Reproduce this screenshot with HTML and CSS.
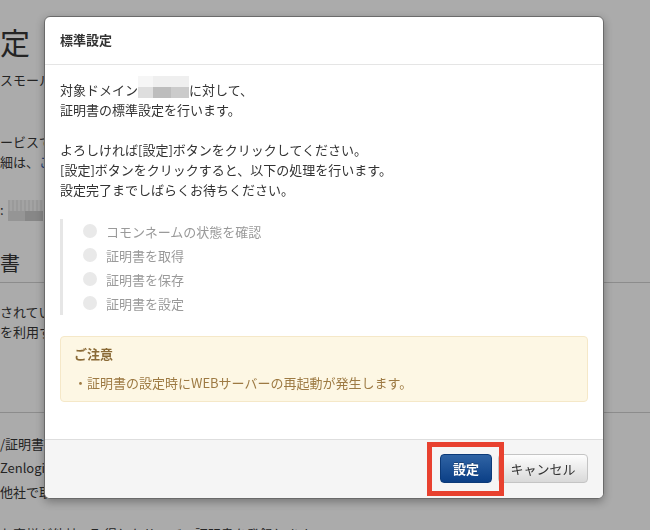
FILE: index.html
```html
<!DOCTYPE html>
<html lang="ja">
<head>
<meta charset="utf-8">
<title>標準設定</title>
<link rel="stylesheet" href="styles.css">
</head>
<body>
<div class="page">
  <div class="pg-title">定</div>
  <p class="pg-p1">スモール</p>
  <p class="pg-p2">ービスで<br>細は、<span class="link">こ</span></p>
  <p class="pg-p3">:<span class="blur-dark"></span></p>
  <h2 class="pg-h2">書</h2>
  <hr class="pg-hr hr1">
  <p class="pg-p4">されてい<br>を利用す</p>
  <hr class="pg-hr hr2">
  <p class="pg-p5">/証明書<br>Zenlogi<br>他社で取得した証明書の登録)</p>
  <p class="pg-p6">お客様が他社で取得したサーバー証明書を登録します。</p>
</div>

<div class="modal">
  <div class="modal-header">
    <h3 class="modal-title">標準設定</h3>
  </div>
  <div class="modal-body">
    <p class="intro">対象ドメイン<span class="blur"></span>に対して、<br>証明書の標準設定を行います。</p>
    <p class="intro">よろしければ[設定]ボタンをクリックしてください。<br>[設定]ボタンをクリックすると、以下の処理を行います。<br>設定完了までしばらくお待ちください。</p>
    <ul class="steps">
      <li class="step"><span class="dot"></span>コモンネームの状態を確認</li>
      <li class="step"><span class="dot"></span>証明書を取得</li>
      <li class="step"><span class="dot"></span>証明書を保存</li>
      <li class="step"><span class="dot"></span>証明書を設定</li>
    </ul>
    <div class="notice">
      <div class="notice-title">ご注意</div>
      <p class="notice-text">・証明書の設定時にWEBサーバーの再起動が発生します。</p>
    </div>
  </div>
  <div class="modal-footer">
    <span class="highlight"><button class="btn btn-primary">設定</button></span>
    <button class="btn btn-default">キャンセル</button>
  </div>
</div>
</body>
</html>
```

FILE: styles.css
```css
html, body {
  margin: 0;
  padding: 0;
}
body {
  background: #ababab;
  color: #242424;
  font-family: "Noto Sans CJK JP", "Noto Sans", sans-serif;
  font-size: 13px;
  width: 650px;
  height: 530px;
  overflow: hidden;
}

/* background page (dimmed) */
.page p, .page h2 {
  margin: 0;
  white-space: nowrap;
}
.pg-title {
  margin-top: 23px;
  font-size: 30px;
  line-height: 36px;
}
.pg-p1 {
  margin-top: 11px !important;
  line-height: 20px;
}
.pg-p2 {
  margin-top: 42px !important;
  line-height: 20px;
}
.pg-p3 {
  margin-top: 25px !important;
  line-height: 26px;
}
.pg-h2 {
  margin-top: 27px !important;
  font-size: 20px;
  font-weight: normal;
  line-height: 26px;
}
.pg-hr {
  border: 0;
  border-top: 1px solid #8c8c8c;
  margin: 0;
}
.hr1 { margin-top: 6px; }
.pg-p4 {
  margin-top: 19px !important;
  line-height: 20px;
}
.hr2 { margin-top: 70px; }
.pg-p5 {
  margin-top: 19px !important;
  line-height: 24px;
}
.pg-p6 {
  margin-top: 18px !important;
  line-height: 24px;
}
.link {
  color: #25467c;
}
.blur-dark {
  display: inline-block;
  width: 35px;
  height: 21px;
  margin-left: 4px;
  vertical-align: -6px;
  background:
    linear-gradient(to right, #959595 0 17px, #878787 17px) bottom / 100% 10px no-repeat,
    repeating-linear-gradient(to right, #9a9a9a 0 2px, #a3a3a3 2px 4px) top / 100% 11px no-repeat;
}

/* modal */
.modal {
  position: fixed;
  left: 44px;
  top: 16px;
  width: 560px;
  box-sizing: border-box;
  background: #fff;
  border: 1px solid #6a6a6a;
  border-radius: 6px;
  box-shadow: 0 3px 8px rgba(0, 0, 0, 0.3);
  color: #333;
  overflow: hidden;
}
.modal-header {
  padding: 13px 15px 14px;
  border-bottom: 1px solid #e5e5e5;
}
.modal-title {
  margin: 0;
  font-size: 13px;
  font-weight: bold;
  line-height: 20px;
  color: #333;
}
.modal-body {
  padding: 14px 15px 16px;
}
.intro {
  margin: 0 0 20px;
  line-height: 20px;
}
.intro:last-of-type {
  margin-bottom: 0;
}
.blur {
  display: inline-block;
  width: 51px;
  height: 22px;
  margin: -3px 0 -2px;
  vertical-align: -1px;
  background:
    linear-gradient(to right, #dedede 0 15px, #bdbdbd 15px 33px, #cbcbcb 33px) bottom / 100% 11px no-repeat,
    linear-gradient(to right, #f6f6f6 0 15px, #efefef 15px) top / 100% 11px no-repeat;
}
.steps {
  list-style: none;
  margin: 19px 0 0;
  padding: 0 0 0 20px;
  border-left: 3px solid #e6e6e6;
}
.step {
  display: flex;
  align-items: center;
  height: 24px;
  color: #9a9a9a;
}
.dot {
  width: 14px;
  height: 14px;
  border-radius: 50%;
  background: #e9e9e9;
  margin-right: 9px;
  flex: none;
}
.notice {
  margin: 21px 0 21px;
  padding: 7px 13px 8px;
  background: #fdf7e4;
  border: 1px solid #f5e8c8;
  border-radius: 4px;
}
.notice-title {
  font-weight: bold;
  line-height: 20px;
  color: #8a6a36;
}
.notice-text {
  margin: 9px 0 0;
  line-height: 20px;
  color: #9d7a43;
}
.modal-footer {
  display: flex;
  justify-content: flex-end;
  align-items: center;
  gap: 6px;
  padding: 14px 15px 15px;
  background: #f5f5f5;
  border-top: 1px solid #dedede;
}
.btn {
  height: 29px;
  padding: 0;
  border-radius: 4px;
  font-family: inherit;
  font-size: 13px;
  line-height: 27px;
  cursor: pointer;
  box-sizing: border-box;
}
.btn-primary {
  width: 52px;
  color: #fff;
  font-weight: bold;
  background: linear-gradient(#2f63a4, #0b3f86);
  border: 1px solid #0c3a78;
  text-shadow: 0 -1px 0 rgba(0, 0, 0, 0.25);
}
.btn-default {
  width: 90px;
  color: #333;
  background: linear-gradient(#fdfdfd, #d9d9d9);
  border: 1px solid #c4c4c4;
}
.highlight {
  position: relative;
  display: inline-flex;
  z-index: 2;
}
.highlight::after {
  content: "";
  position: absolute;
  left: -13px;
  right: -12px;
  top: -12px;
  bottom: -13px;
  border: 5px solid #e8412f;
  pointer-events: none;
}
```
